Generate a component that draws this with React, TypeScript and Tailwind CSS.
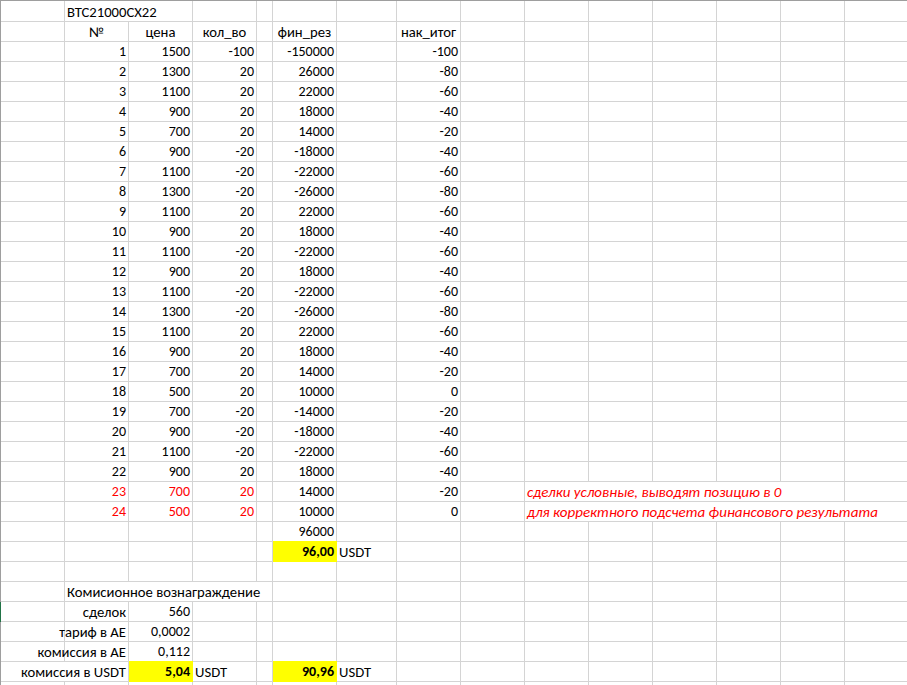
import { ReactNode } from 'react';

type Cell = {
  t?: ReactNode;
  span?: number;
  a?: 'l' | 'r' | 'c';
  red?: boolean;
  bold?: boolean;
  fill?: boolean;
  italic?: boolean;
};

const SPAN: Record<number, string> = {
  1: '',
  2: 'col-span-2',
  4: 'col-span-4',
  5: 'col-span-5',
  6: 'col-span-6',
};

const ALIGN = { l: 'justify-start pl-[2px]', r: 'justify-end pr-[2px]', c: 'justify-center' };

const trades = [
  [1, 1500, -100, -150000, -100],
  [2, 1300, 20, 26000, -80],
  [3, 1100, 20, 22000, -60],
  [4, 900, 20, 18000, -40],
  [5, 700, 20, 14000, -20],
  [6, 900, -20, -18000, -40],
  [7, 1100, -20, -22000, -60],
  [8, 1300, -20, -26000, -80],
  [9, 1100, 20, 22000, -60],
  [10, 900, 20, 18000, -40],
  [11, 1100, -20, -22000, -60],
  [12, 900, 20, 18000, -40],
  [13, 1100, -20, -22000, -60],
  [14, 1300, -20, -26000, -80],
  [15, 1100, 20, 22000, -60],
  [16, 900, 20, 18000, -40],
  [17, 700, 20, 14000, -20],
  [18, 500, 20, 10000, 0],
  [19, 700, -20, -14000, -20],
  [20, 900, -20, -18000, -40],
  [21, 1100, -20, -22000, -60],
  [22, 900, 20, 18000, -40],
  [23, 700, 20, 14000, -20],
  [24, 500, 20, 10000, 0],
];

// rows 23-24 are the closing trades, with a note beside them
const notes: Record<number, { text: string; span: number }> = {
  23: { text: 'сделки условные, выводят позицию в 0', span: 5 },
  24: { text: 'для корректного подсчета финансового результата', span: 6 },
};

const Row = ({ cells, first, selected }: { cells: Record<number, Cell>; first?: boolean; selected?: boolean }) => {
  const out: ReactNode[] = [];
  for (let i = 0; i < 15; i++) {
    const c = cells[i];
    const span = c?.span ?? 1;
    const numeric = typeof c?.t === 'number' || (typeof c?.t === 'string' && /^[-\d,]+$/.test(c.t));
    out.push(
      <div
        key={i}
        className={[
          'flex items-end pb-[2px] whitespace-nowrap border-b',
          c?.italic ? 'text-[15px]' : numeric ? 'text-[14px]' : 'text-[14.67px]',
          c?.fill ? 'bg-[#ffff00] border-[#ffff00] shadow-[0_-1px_0_#ffff00] relative z-10' : 'border-[#d4d4d4]',
          i + span < 15 ? 'border-r' : '',
          SPAN[span],
          ALIGN[c?.a ?? 'r'],
          c?.red ? 'text-[#ff0000]' : 'text-black',
          c?.bold ? 'font-bold' : '',
          c?.italic ? 'italic' : '',
        ].join(' ')}
      >
        {c?.t}
      </div>
    );
    i += span - 1;
  }
  return (
    <div
      className={`grid grid-cols-[64px_64px_64px_64px_16px_64px_60px_64px_64px_64px_64px_64px_64px_64px_64px] border-l ${
        selected ? 'border-[#217346]' : 'border-[#9e9e9e]'
      } ${first ? 'h-[21px]' : 'h-5'}`}
    >
      {out}
    </div>
  );
};

export default function App() {
  return (
    <div className="w-[907px] h-[685px] overflow-hidden bg-white border-t border-[#9e9e9e] font-['Carlito','Calibri','Liberation_Sans',sans-serif] leading-[14px]">
      <Row first cells={{ 1: { t: 'BTC21000CX22', span: 2, a: 'l' } }} />
      <Row
        cells={{
          1: { t: '№', a: 'c' },
          2: { t: 'цена', a: 'c' },
          3: { t: 'кол_во', a: 'c' },
          5: { t: 'фин_рез', a: 'c' },
          7: { t: 'нак_итог', a: 'c' },
        }}
      />
      {trades.map(([n, price, qty, fin, cum]) => {
        const red = n >= 23;
        const note = notes[n];
        const cells: Record<number, Cell> = {
          1: { t: n, red },
          2: { t: price, red },
          3: { t: qty, red },
          5: { t: fin },
          7: { t: cum },
        };
        if (note) cells[9] = { t: note.text, span: note.span, a: 'l', red: true, italic: true };
        return <Row key={n} cells={cells} />;
      })}
      <Row cells={{ 5: { t: '96000' } }} />
      <Row cells={{ 5: { t: '96,00', bold: true, fill: true }, 6: { t: 'USDT', a: 'l' } }} />
      <Row cells={{}} />
      <Row cells={{ 1: { t: 'Комисионное вознаграждение', span: 4, a: 'l' } }} />
      <Row selected cells={{ 1: { t: 'сделок' }, 2: { t: '560' } }} />
      <Row cells={{ 1: { t: 'тариф в АЕ' }, 2: { t: '0,0002' } }} />
      <Row cells={{ 1: { t: 'комиссия в АЕ' }, 2: { t: '0,112' } }} />
      <Row
        cells={{
          0: { t: 'комиссия в USDT', span: 2 },
          2: { t: '5,04', bold: true, fill: true },
          3: { t: 'USDT', a: 'l' },
          5: { t: '90,96', bold: true, fill: true },
          6: { t: 'USDT', a: 'l' },
        }}
      />
      <Row cells={{}} />
    </div>
  );
}
